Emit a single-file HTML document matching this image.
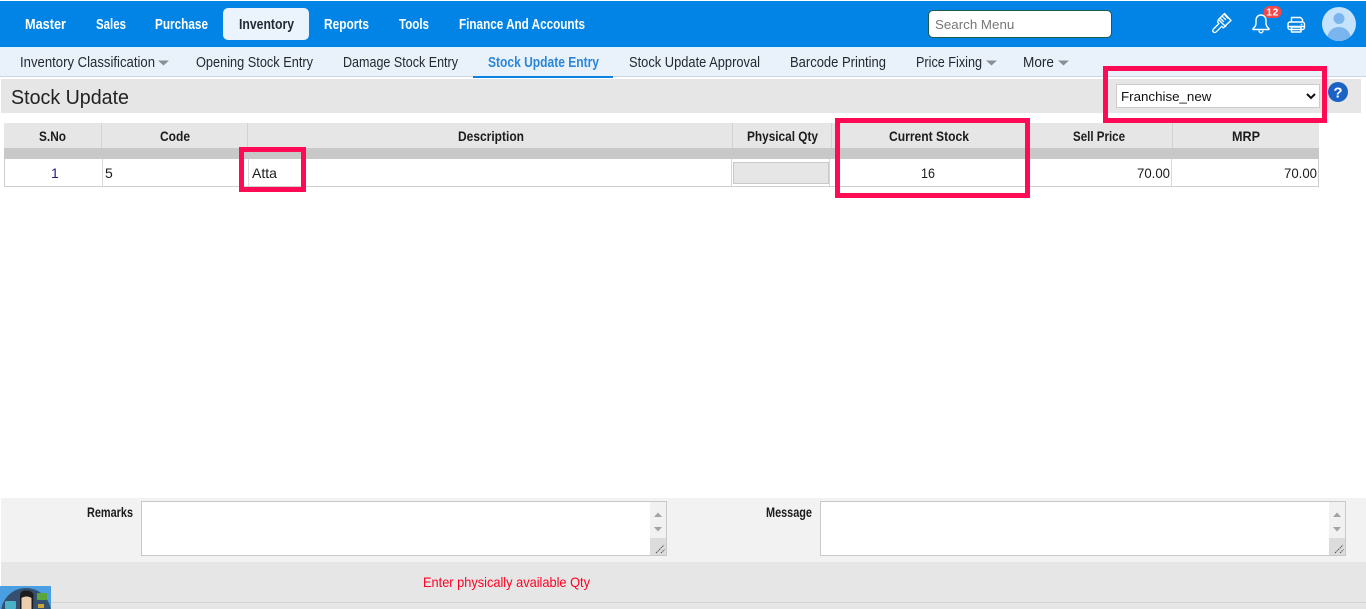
<!DOCTYPE html>
<html lang="en"><head><meta charset="utf-8"><title>Stock Update</title>
<style>
html,body{margin:0;padding:0;background:#fff;width:1366px;height:609px;overflow:hidden;font-family:"Liberation Sans",sans-serif}
.b{position:absolute;box-sizing:border-box}
svg{position:absolute;left:0;top:0}
select,input,textarea{font-family:"Liberation Sans",sans-serif;outline:none}
input::placeholder{color:#777}
.nav{font-size:15px;font-weight:bold;fill:#fff}
.sub{font-size:14.500px;fill:#24292e}
.th{font-size:14px;font-weight:bold;fill:#1c1c1c}
.td{font-size:14px;fill:#1c1c1c}
</style></head><body>
<div class="b" style="left:0;top:1px;width:1366px;height:46px;background:#0284e6"></div>
<div class="b" style="left:223px;top:8px;width:86px;height:32px;background:#ebf4fc;border-radius:5px"></div>
<input class="b" placeholder="Search Menu" style="left:928px;top:10px;width:184px;height:28px;border:1px solid #1d5a4a;border-radius:5px;background:#fff;font-size:13.333px;padding:0 6px">
<div class="b" style="left:0;top:47px;width:1366px;height:30px;background:#e9f2fb;border-bottom:1px solid #cdd6de"></div>
<div class="b" style="left:473px;top:76px;width:140px;height:2px;background:#0a84e0"></div>
<div class="b" style="left:1px;top:79px;width:1360px;height:34px;background:#e6e6e6"></div>

<div class="b" style="left:4px;top:123px;width:1315px;height:25px;background:#e6e6e6"></div>
<div class="b" style="left:4px;top:148px;width:1315px;height:11px;background:#c8c8c8"></div>
<div class="b" style="left:4px;top:159px;width:1315px;height:28px;background:#fff;border:1px solid #cfcfcf;border-top:0"></div>
<div class="b" style="left:101px;top:123px;width:1px;height:25px;background:#d2d2d2"></div>
<div class="b" style="left:247px;top:123px;width:1px;height:25px;background:#d2d2d2"></div>
<div class="b" style="left:732px;top:123px;width:1px;height:25px;background:#d2d2d2"></div>
<div class="b" style="left:831px;top:123px;width:1px;height:25px;background:#d2d2d2"></div>
<div class="b" style="left:1172px;top:123px;width:1px;height:25px;background:#d2d2d2"></div>
<div class="b" style="left:102px;top:159px;width:1px;height:27px;background:#d8d8d8"></div>
<div class="b" style="left:248px;top:159px;width:1px;height:27px;background:#d8d8d8"></div>
<div class="b" style="left:731px;top:159px;width:1px;height:27px;background:#d8d8d8"></div>
<div class="b" style="left:829px;top:159px;width:1px;height:27px;background:#d8d8d8"></div>
<div class="b" style="left:1171px;top:159px;width:1px;height:27px;background:#d8d8d8"></div>
<div class="b" style="left:733px;top:162px;width:96px;height:22px;background:#e6e6e6;border:1px solid #c9c9c9"></div>

<select class="b" style="left:1116px;top:84px;width:204px;height:24px;background:#fff;border:1px solid #ccc;font-size:13.333px;padding:0;color:#111"><option>Franchise_new</option></select>

<div class="b" style="left:1px;top:498px;width:1365px;height:64px;background:#f2f2f2"></div>
<div class="b" style="left:1px;top:562px;width:1365px;height:47px;background:#e6e6e6"></div>
<div class="b" style="left:1px;top:602px;width:1365px;height:1px;background:#d4d4d4"></div>
<textarea class="b" style="left:141px;top:501px;width:526px;height:55px;border:1px solid #c8c8c8;background:#fff;resize:none;margin:0"></textarea>
<textarea class="b" style="left:820px;top:501px;width:526px;height:55px;border:1px solid #c8c8c8;background:#fff;resize:none;margin:0"></textarea>

<svg width="1366" height="609" viewBox="0 0 1366 609" xmlns="http://www.w3.org/2000/svg">
<text class="nav" x="25" y="29" textLength="41" lengthAdjust="spacingAndGlyphs">Master</text>
<text class="nav" x="96" y="29" textLength="30" lengthAdjust="spacingAndGlyphs">Sales</text>
<text class="nav" x="155" y="29" textLength="53" lengthAdjust="spacingAndGlyphs">Purchase</text>
<text class="nav" x="239" y="29" textLength="55" lengthAdjust="spacingAndGlyphs" style="fill:#1f2a33">Inventory</text>
<text class="nav" x="324" y="29" textLength="45" lengthAdjust="spacingAndGlyphs">Reports</text>
<text class="nav" x="399" y="29" textLength="30" lengthAdjust="spacingAndGlyphs">Tools</text>
<text class="nav" x="459" y="29" textLength="126" lengthAdjust="spacingAndGlyphs">Finance And Accounts</text>

<text class="sub" x="20" y="67" textLength="135" lengthAdjust="spacingAndGlyphs">Inventory Classification</text>
<path d="M158 60.500h11l-5.500 5z" fill="#8a8f94"/>
<text class="sub" x="196" y="67" textLength="117" lengthAdjust="spacingAndGlyphs">Opening Stock Entry</text>
<text class="sub" x="343" y="67" textLength="115" lengthAdjust="spacingAndGlyphs">Damage Stock Entry</text>
<text class="sub" x="488" y="67" textLength="111" lengthAdjust="spacingAndGlyphs" style="fill:#2a86d8;font-weight:bold">Stock Update Entry</text>
<text class="sub" x="629" y="67" textLength="131" lengthAdjust="spacingAndGlyphs">Stock Update Approval</text>
<text class="sub" x="790" y="67" textLength="96" lengthAdjust="spacingAndGlyphs">Barcode Printing</text>
<text class="sub" x="916" y="67" textLength="66" lengthAdjust="spacingAndGlyphs">Price Fixing</text>
<path d="M986 60.500h11l-5.500 5z" fill="#8a8f94"/>
<text class="sub" x="1023" y="67" textLength="31" lengthAdjust="spacingAndGlyphs">More</text>
<path d="M1058 60.500h11l-5.500 5z" fill="#8a8f94"/>

<text x="11" y="104" font-size="20" fill="#222" textLength="118" lengthAdjust="spacingAndGlyphs">Stock Update</text>

<text class="th" x="39" y="141" textLength="27" lengthAdjust="spacingAndGlyphs">S.No</text>
<text class="th" x="160" y="141" textLength="30" lengthAdjust="spacingAndGlyphs">Code</text>
<text class="th" x="458" y="141" textLength="66" lengthAdjust="spacingAndGlyphs">Description</text>
<text class="th" x="747" y="141" textLength="71" lengthAdjust="spacingAndGlyphs">Physical Qty</text>
<text class="th" x="889" y="141" textLength="80" lengthAdjust="spacingAndGlyphs">Current Stock</text>
<text class="th" x="1073" y="141" textLength="52" lengthAdjust="spacingAndGlyphs">Sell Price</text>
<text class="th" x="1232" y="141" textLength="28" lengthAdjust="spacingAndGlyphs">MRP</text>

<text class="td" x="51" y="178" style="fill:#2a1a7a">1</text>
<text class="td" x="105" y="178">5</text>
<text class="td" x="252" y="178" textLength="25" lengthAdjust="spacingAndGlyphs">Atta</text>
<text class="td" x="921" y="178" textLength="14" lengthAdjust="spacingAndGlyphs">16</text>
<text class="td" x="1137" y="178" textLength="33" lengthAdjust="spacingAndGlyphs">70.00</text>
<text class="td" x="1284" y="178" textLength="33" lengthAdjust="spacingAndGlyphs">70.00</text>

<text class="th" x="87" y="517" textLength="46" lengthAdjust="spacingAndGlyphs">Remarks</text>
<text class="th" x="766" y="517" textLength="46" lengthAdjust="spacingAndGlyphs">Message</text>
<text x="423" y="587" font-size="14" fill="#ff0022" textLength="167" lengthAdjust="spacingAndGlyphs">Enter physically available Qty</text>

<!-- pink highlight boxes -->
<g fill="none" stroke="#ff0a54" stroke-width="5">
<rect x="1105.500" y="68.500" width="219" height="52"/>
<rect x="837.500" y="120.500" width="190" height="75"/>
<rect x="241.500" y="149.500" width="62" height="40"/>
</g>

<!-- help -->
<circle cx="1338" cy="92" r="10" fill="#1a63c4"/>
<text x="1338" y="97.500" font-size="15" font-weight="bold" fill="#fff" text-anchor="middle">?</text>

<!-- brush -->
<g fill="none" stroke="#fff" stroke-width="1.300" stroke-linejoin="round" stroke-linecap="round">
<path d="M1218.500 19.500l6-6 6.500 7-6 5.500z"/>
<path d="M1222 16l3.500 3.500M1224.500 14.500l3 3.500M1220 18l3.500 3.500"/>
<path d="M1218.500 19.500l-1 2.500 1.500 1.500-5.500 5.500c-2 2.200.6 4.800 2.800 2.800l5.500-5.500 1.500 1.500 2.700-1.800"/>
</g>
<!-- bell -->
<g fill="none" stroke="#fff" stroke-width="1.400" stroke-linejoin="round">
<path d="M1261 15c-3.300 0-5 2.500-5 5.500v3c0 2.500-1.600 4-3 5.200v.8h16v-.8c-1.400-1.200-3-2.700-3-5.200v-3c0-3-1.700-5.500-5-5.500z"/>
<path d="M1259 30.500c0 3 4 3 4 0"/>
</g>
<rect x="1263.500" y="6" width="18" height="12" rx="6" fill="#f4484b"/>
<text x="1272.500" y="15.500" font-size="10.500" font-weight="bold" fill="#fff" text-anchor="middle" letter-spacing=".4">12</text>
<!-- printer -->
<g fill="none" stroke="#fff" stroke-width="1.400" stroke-linejoin="round">
<path d="M1291.500 22v-4.500h9l2 2v2.500"/>
<rect x="1288" y="22" width="16.500" height="7.500" rx="2"/>
<path d="M1288 26.500h16.500"/>
<rect x="1291.500" y="27" width="9.500" height="5"/>
</g>
<circle cx="1301.500" cy="24.500" r=".9" fill="#fff"/>
<!-- avatar -->
<defs><clipPath id="av"><circle cx="1339" cy="24" r="17"/></clipPath>
<clipPath id="th"><rect x="0" y="586" width="51" height="23"/></clipPath></defs>
<circle cx="1339" cy="24" r="17" fill="#c6e3fd"/>
<g clip-path="url(#av)" fill="#7ab5ee">
<circle cx="1339" cy="18.500" r="5.500"/>
<ellipse cx="1339" cy="37.500" rx="11.500" ry="10.500"/>
</g>

<!-- scrollbars -->
<g>
<rect x="650" y="502" width="16" height="53" fill="#f1f1f1"/>
<rect x="650" y="538" width="16" height="17" fill="#dcdcdc"/>
<path d="M654 517l4-4.500 4 4.500z" fill="#a3a3a3"/>
<path d="M654 527h8l-4 4.500z" fill="#a3a3a3"/>
<path d="M656 553l8-8M661 553l3.500-3.500" stroke="#444" stroke-width=".9" stroke-dasharray="1.500 .7" fill="none"/>
<rect x="1329" y="502" width="16" height="53" fill="#f1f1f1"/>
<rect x="1329" y="538" width="16" height="17" fill="#dcdcdc"/>
<path d="M1333 517l4-4.500 4 4.500z" fill="#a3a3a3"/>
<path d="M1333 527h8l-4 4.500z" fill="#a3a3a3"/>
<path d="M1335 553l8-8M1340 553l3.500-3.500" stroke="#444" stroke-width=".9" stroke-dasharray="1.500 .7" fill="none"/>
</g>

<!-- bot thumbnail -->
<g clip-path="url(#th)">
<rect x="0" y="586" width="51" height="23" fill="#4a9ee2"/>
<circle cx="26" cy="613" r="25" fill="#35506f"/>
<path d="M20 609v-13c0-4 2-5.500 6-5.500s8 1 7.500 6.500l-.5 12z" fill="#1d1d1f"/>
<path d="M21.500 609v-11c3-2 7-2 10 0v11z" fill="#eccdae"/>
<rect x="5" y="601" width="11" height="8" rx="1" fill="#4ab2c7"/>
<rect x="37" y="593" width="10" height="7" rx="1" fill="#5aa63d"/>
<rect x="38" y="604" width="6" height="4" fill="#c9a53a"/>
</g>
</svg>
</body></html>
